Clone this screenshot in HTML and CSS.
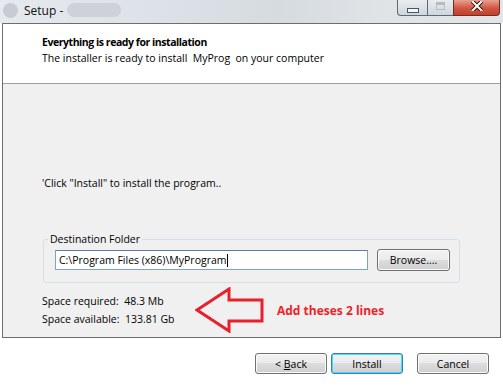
FILE: index.html
```html
<!DOCTYPE html>
<html>
<head>
<meta charset="utf-8">
<link rel="stylesheet" href="styles.css">
</head>
<body>
<div class="titlebar">
  <div class="tb-left">
    <span class="app-icon"></span>
    <span class="tb-title">Setup -</span>
    <span class="tb-blur"></span>
  </div>
  <div class="tb-buttons">
    <div class="tb-btn tb-min"><span class="min-glyph"></span></div>
    <div class="tb-btn tb-max"><span class="max-glyph"></span></div>
    <div class="tb-btn tb-close">
      <svg width="12" height="10" viewBox="0 0 12 10"><path d="M1.5 0.5 L10.5 9.5 M10.5 0.5 L1.5 9.5" stroke="#3a1a14" stroke-width="4" stroke-linecap="square"/><path d="M1.5 0.5 L10.5 9.5 M10.5 0.5 L1.5 9.5" stroke="#ffffff" stroke-width="2" stroke-linecap="square"/></svg>
    </div>
  </div>
</div>
<div class="frame">
  <div class="header">
    <div class="h-title">Everything is ready for installation</div>
    <div class="h-sub">The installer is ready to install&nbsp; MyProg&nbsp; on your computer</div>
  </div>
  <div class="content">
    <div class="click-text">'Click "Install" to install the program..</div>
    <fieldset class="group">
      <legend>Destination Folder</legend>
      <div class="path-row">
        <div class="path-input">C:\Program Files (x86)\MyProgram<span class="caret"></span></div>
        <div class="btn browse">Browse....</div>
      </div>
    </fieldset>
    <div class="space-row">
      <div class="space-lines">
        <div>Space required:&nbsp; 48.3 Mb</div>
        <div>Space available:&nbsp; 133.81 Gb</div>
      </div>
      <svg class="arrow" width="70" height="46" viewBox="0 0 70 46"><polygon points="2,23 34,2 34,13 67,13 67,34 34,34 34,44" fill="none" stroke="#e8202a" stroke-width="3"/></svg>
      <div class="note">Add theses 2 lines</div>
    </div>
  </div>
</div>
<div class="footer">
  <div class="btn">&lt;&nbsp;<u>B</u>ack</div>
  <div class="btn focused">Install</div>
  <div class="btn cancel">Cancel</div>
</div>
</body>
</html>
```

FILE: styles.css
```css
* { box-sizing: border-box; }
html, body { margin: 0; padding: 0; }
body {
  width: 503px;
  height: 388px;
  overflow: hidden;
  background: #ffffff;
  font-family: "Open Sans", "Noto Sans", sans-serif;
  font-size: 10.5px;
  color: #000;
}
.titlebar {
  height: 23px;
  display: flex;
  justify-content: space-between;
  background: linear-gradient(90deg, #e6e9ee 0%, #dde2e8 30%, #d6dbe0 55%, #dfe3e6 75%, #e3e6e9 100%);
}
.tb-left {
  display: flex;
  align-items: flex-start;
  padding: 3px 0 0 3px;
}
.app-icon {
  width: 15px;
  height: 15px;
  border-radius: 50%;
  background: #c9cbd2;
}
.tb-title {
  margin-left: 6px;
  font-size: 12px;
  line-height: 15px;
  color: #111;
}
.tb-blur {
  margin-left: 4px;
  width: 54px;
  height: 14px;
  border-radius: 7px;
  background: #cfd1d8;
}
.tb-buttons {
  display: flex;
  margin-right: 3px;
  height: 16px;
}
.tb-btn {
  height: 16px;
  border: 1px solid #5d6a76;
  border-top: none;
  display: flex;
  align-items: center;
  justify-content: center;
}
.tb-min {
  width: 30px;
  border-radius: 0 0 0 4px;
  background: linear-gradient(#e9ecef, #cfd6dc);
  border-right: none;
}
.tb-max {
  width: 26px;
  background: linear-gradient(#e9ecef, #cfd6dc);
  border-right: none;
}
.tb-close {
  width: 47px;
  border-radius: 0 0 4px 0;
  background: linear-gradient(#e8a090, #d0553f 55%, #c4402a);
  border-color: #6a3026;
  padding-bottom: 4px;
}
.min-glyph {
  width: 12px;
  height: 5px;
  margin-top: 6px;
  background: #f4f6f8;
  border: 1px solid #4a5560;
}
.max-glyph {
  width: 9px;
  height: 8px;
  margin-bottom: 4px;
  border: 1px solid #b6bcc2;
  box-shadow: inset 0 2px 0 #b6bcc2;
}
.frame {
  margin-left: 2px;
  width: 499px;
  height: 315px;
  border: 1px solid #6d6d6d;
  background: #f0f0f0;
}
.header {
  height: 60px;
  background: #ffffff;
  border-bottom: 1px solid #a0a0a0;
  padding: 10px 0 0 39px;
  line-height: 16px;
}
.h-title { font-weight: bold; letter-spacing: -0.45px; }
.content {
  padding: 0 0 0 37px;
}
.click-text {
  margin-top: 91px;
  padding-left: 2px;
  line-height: 16px;
}
.group {
  margin: 41px 0 0 3px;
  width: 417px;
  border: 1px solid #d5dfe5;
  border-radius: 3px;
  padding: 3px 9px 11px 11px;
}
.group legend {
  padding: 0 2px;
  margin-left: -7px;
  line-height: 14px;
}
.path-row {
  display: flex;
  align-items: center;
  justify-content: space-between;
}
.path-input {
  width: 313px;
  height: 20px;
  background: #fff;
  border: 1px solid #7da2ce;
  border-top-color: #5c7fa3;
  padding: 0 3px;
  line-height: 18px;
  display: flex;
  align-items: center;
}
.caret {
  display: inline-block;
  width: 1px;
  height: 13px;
  background: #000;
}
.btn {
  width: 72px;
  height: 21px;
  border: 1px solid #707070;
  border-radius: 3px;
  background: linear-gradient(#f2f2f2 0%, #ebebeb 50%, #dddddd 50%, #cfcfcf 100%);
  box-shadow: inset 0 0 0 1px #fbfbfb;
  display: flex;
  align-items: center;
  justify-content: center;
  line-height: 14px;
}
.btn.browse {
  width: 73px;
  height: 22px;
}
.btn u { text-decoration: underline; }
.btn.focused {
  border-color: #3c7fb1;
  box-shadow: inset 0 0 0 1px #48d8fb;
}
.space-row {
  display: flex;
  align-items: center;
  margin-top: 4px;
  padding-left: 2px;
}
.space-lines {
  line-height: 18px;
  width: 153px;
}
.arrow {
  display: block;
}
.note {
  margin-left: 12px;
  color: #ee2228;
  font-weight: bold;
  font-size: 12px;
}
.footer {
  display: flex;
  justify-content: flex-end;
  padding: 15px 14px 0 0;
}
.footer .btn + .btn { margin-left: 4px; }
.footer .btn.cancel { margin-left: 14px; }
```
